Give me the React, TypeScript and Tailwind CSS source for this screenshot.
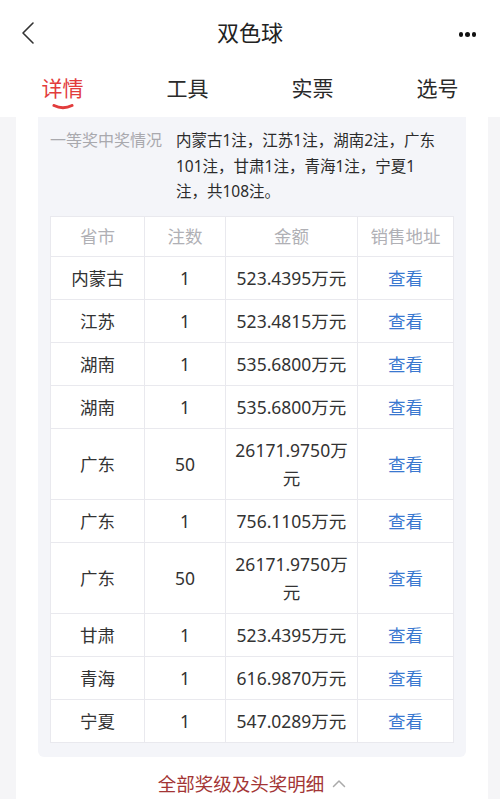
import React from "react";

const rows: { p: string; n: string; amt: string }[] = [
  { p: "内蒙古", n: "1", amt: "523.4395万元" },
  { p: "江苏", n: "1", amt: "523.4815万元" },
  { p: "湖南", n: "1", amt: "535.6800万元" },
  { p: "湖南", n: "1", amt: "535.6800万元" },
  { p: "广东", n: "50", amt: "26171.9750万元" },
  { p: "广东", n: "1", amt: "756.1105万元" },
  { p: "广东", n: "50", amt: "26171.9750万元" },
  { p: "甘肃", n: "1", amt: "523.4395万元" },
  { p: "青海", n: "1", amt: "616.9870万元" },
  { p: "宁夏", n: "1", amt: "547.0289万元" },
];

const tabs = ["详情", "工具", "实票", "选号"];

const font = { fontFamily: '"Noto Sans", "Noto Sans CJK SC", sans-serif' };

export default function App() {
  return (
    <div className="w-[500px] h-[799px] overflow-hidden bg-white flex flex-col" style={font}>
      {/* nav bar */}
      <div className="relative h-[64px] shrink-0 flex items-center justify-center">
        <svg className="absolute left-[20px] top-[21px]" width="16" height="24" viewBox="0 0 16 24" fill="none">
          <path d="M13 2 L3 12 L13 22" stroke="#333" strokeWidth="1.6" strokeLinecap="round" strokeLinejoin="round" />
        </svg>
        <span className="text-[22px] text-[#222] leading-none">双色球</span>
        <div className="absolute right-[24px] top-[32px] flex gap-[2px]">
          <span className="w-[4.5px] h-[4.5px] rounded-full bg-[#111]" />
          <span className="w-[4.5px] h-[4.5px] rounded-full bg-[#111]" />
          <span className="w-[4.5px] h-[4.5px] rounded-full bg-[#111]" />
        </div>
      </div>

      {/* tabs */}
      <div className="h-[53px] shrink-0 grid grid-cols-4">
        {tabs.map((t, i) => (
          <div key={t} className="flex flex-col items-center pt-[10px]">
            <span className={`text-[21px] leading-[28px] ${i === 0 ? "text-[#e23c3c]" : "text-[#2a2a2a]"}`}>{t}</span>
            {i === 0 && (
              <svg width="22" height="6" viewBox="0 0 22 6" className="mt-[2px]">
                <path d="M2 1.5 Q11 6 20 1.5" stroke="#e23c3c" strokeWidth="3" fill="none" strokeLinecap="round" />
              </svg>
            )}
          </div>
        ))}
      </div>

      {/* body */}
      <div className="flex-1 bg-[#f5f5f7] pl-[16px] pr-[12px]">
        <div className="h-full bg-white px-[22px]">
          <div className="bg-[#f4f5f9] rounded-b-[6px] px-[12px] pt-[11px] pb-[14px]">
            <div className="flex leading-[25.5px]">
              <div className="w-[126px] shrink-0 text-[16px] text-[#a9a9ae]">一等奖中奖情况</div>
              <div className="text-[15.5px] text-[#2b2b2b]">
                内蒙古1注，江苏1注，湖南2注，广东<br />
                101注，甘肃1注，青海1注，宁夏1<br />
                注，共108注。
              </div>
            </div>

            <table className="mt-[11px] w-[403px] border-collapse bg-white text-[17.5px] table-fixed">
              <colgroup>
                <col className="w-[94px]" />
                <col className="w-[81px]" />
                <col className="w-[132px]" />
                <col className="w-[96px]" />
              </colgroup>
              <thead>
                <tr className="text-[#b0b0b5]">
                  <th className="font-normal border border-[#e9e9ee] h-[40px] p-0 leading-[28px]">省市</th>
                  <th className="font-normal border border-[#e9e9ee] h-[40px] p-0 leading-[28px]">注数</th>
                  <th className="font-normal border border-[#e9e9ee] h-[40px] p-0 leading-[28px]">金额</th>
                  <th className="font-normal border border-[#e9e9ee] h-[40px] p-0 leading-[28px]">销售地址</th>
                </tr>
              </thead>
              <tbody className="text-[#333]">
                {rows.map((r, i) => (
                  <tr key={i}>
                    <td className="border border-[#e9e9ee] text-center py-[7px] leading-[28px]">{r.p}</td>
                    <td className="border border-[#e9e9ee] text-center py-[7px] leading-[28px]">{r.n}</td>
                    <td className="border border-[#e9e9ee] text-center py-[7px] px-[8px] leading-[28px]">{r.amt}</td>
                    <td className="border border-[#e9e9ee] text-center py-[7px] leading-[28px] text-[#3a78d0]">查看</td>
                  </tr>
                ))}
              </tbody>
            </table>
          </div>

          <div className="flex items-center justify-center gap-[8px] pt-[14px]">
            <span className="text-[18.5px] text-[#a33535] leading-[26px]">全部奖级及头奖明细</span>
            <svg width="14" height="9" viewBox="0 0 14 9" fill="none">
              <path d="M1.5 7.5 L7 2 L12.5 7.5" stroke="#aaa" strokeWidth="1.5" strokeLinecap="round" strokeLinejoin="round" />
            </svg>
          </div>
        </div>
      </div>
    </div>
  );
}
